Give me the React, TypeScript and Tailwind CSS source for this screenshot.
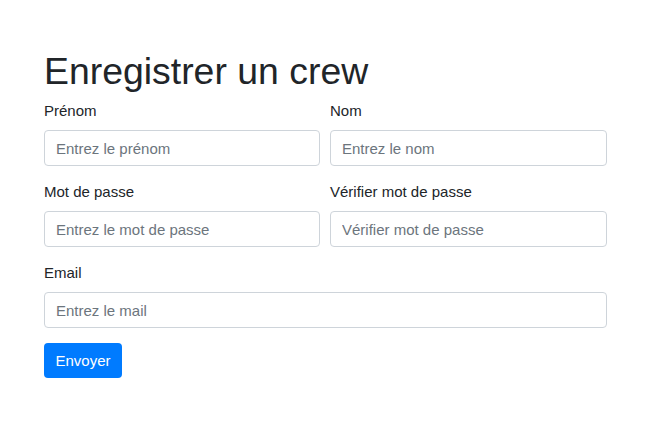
import React from "react";

const FIELDS_TOP = [
    { label: "Prénom", placeholder: "Entrez le prénom", type: "text" },
    { label: "Nom", placeholder: "Entrez le nom", type: "text" },
];

const FIELDS_PASS = [
    { label: "Mot de passe", placeholder: "Entrez le mot de passe", type: "password" },
    { label: "Vérifier mot de passe", placeholder: "Vérifier mot de passe", type: "password" },
];

function Field({ label, placeholder, type }: { label: string; placeholder: string; type: string }) {
    return (
        <div className="flex flex-col mb-[15px] min-w-0">
            <label className="text-[15px] leading-[22px] mb-[8px] text-[#212529]">{label}</label>
            <input
                type={type}
                placeholder={placeholder}
                className="h-[36px] w-full rounded-[4px] border border-[#ced4da] bg-white px-[11px] text-[15px] text-[#495057] placeholder:text-[#6c757d] outline-none"
            />
        </div>
    );
}

export default function App() {
    return (
        <div
            className="min-h-[434px] w-full bg-white text-[#212529]"
            style={{ fontFamily: '"Liberation Sans", Arial, sans-serif' }}
        >
            <div className="w-[563px] ml-[44px] pt-[49px]">
                {/* Title */}
                <h1 className="text-[37.4px] leading-[44px] font-normal mb-[7px] text-[#212529]">Enregistrer un crew</h1>

                <form onSubmit={e => e.preventDefault()}>
                    {/* Name row */}
                    <div className="grid grid-cols-[276px_277px] gap-x-[10px]">
                        {FIELDS_TOP.map(f => (
                            <Field key={f.label} {...f} />
                        ))}
                    </div>

                    {/* Password row */}
                    <div className="grid grid-cols-[276px_277px] gap-x-[10px]">
                        {FIELDS_PASS.map(f => (
                            <Field key={f.label} {...f} />
                        ))}
                    </div>

                    <Field label="Email" placeholder="Entrez le mail" type="email" />

                    <button
                        type="submit"
                        className="h-[35px] px-[11.5px] rounded-[4px] bg-[#007bff] text-white text-[15px] leading-[22px]"
                    >
                        Envoyer
                    </button>
                </form>
            </div>
        </div>
    );
}
